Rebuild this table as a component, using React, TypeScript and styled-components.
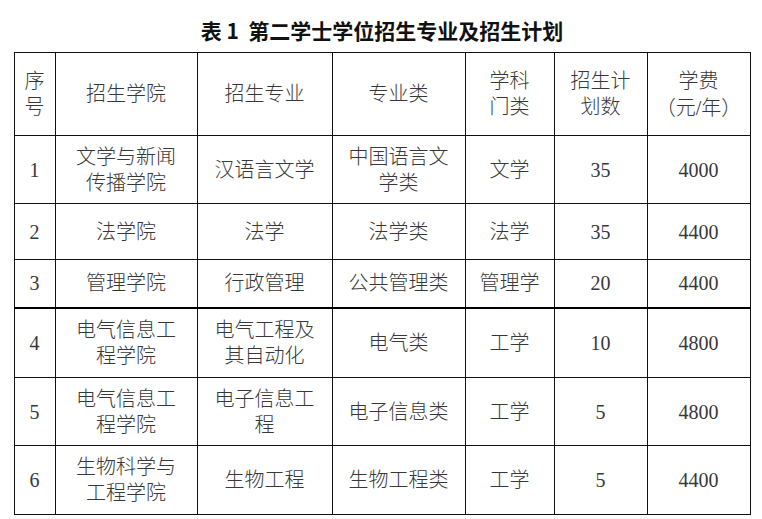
import React from "react";
import styled, { createGlobalStyle } from "styled-components";

const GlobalStyle = createGlobalStyle`
  html, body {
    margin: 0;
    padding: 0;
    background: #ffffff;
  }
`;

const Page = styled.div`
  width: 762px;
  height: 519px;
  padding: 20px 12px 0 14px;
  box-sizing: border-box;
  display: flex;
  flex-direction: column;
  align-items: center;
`;

const Title = styled.h1`
  margin: 0 0 11px 0;
  height: 21px;
  line-height: 21px;
  font-family: "Noto Sans CJK SC", "Noto Sans", sans-serif;
  font-weight: 700;
  font-size: 21px;
  color: #111;
  white-space: pre;
`;

const Table = styled.table`
  width: 736px;
  border-collapse: collapse;
  table-layout: fixed;
  font-family: "Liberation Serif", "Noto Sans CJK SC", serif;
  font-size: 20px;
  font-weight: 300;
  color: #383838;
`;

const Row = styled.tr<{ $h: number; $thick?: boolean }>`
  height: ${(p) => p.$h}px;
  & > td {
    border-bottom: ${(p) => (p.$thick ? "2px solid #000" : "1px solid #111")};
  }
`;

const Cell = styled.td`
  border: 1px solid #111;
  padding: 0;
  text-align: center;
  vertical-align: middle;
  line-height: 26px;
`;

// full-width bracket: glyph sits on the inner side of a 1em box
const Paren = styled.span<{ $side: "open" | "close" }>`
  display: inline-block;
  width: 1em;
  text-align: ${(p) => (p.$side === "open" ? "right" : "left")};
  font-family: "Noto Sans CJK SC", sans-serif;
`;

const widths = [41, 142, 135, 133, 89, 93, 103];

const header: React.ReactNode[] = [
  "序\n号",
  "招生学院",
  "招生专业",
  "专业类",
  "学科\n门类",
  "招生计\n划数",
  <>
    学费
    <br />
    <Paren $side="open">（</Paren>元/年<Paren $side="close">）</Paren>
  </>,
];

const rows: { h: number; thick?: boolean; cells: string[] }[] = [
  { h: 68, cells: ["1", "文学与新闻\n传播学院", "汉语言文学", "中国语言文\n学类", "文学", "35", "4000"] },
  { h: 56, cells: ["2", "法学院", "法学", "法学类", "法学", "35", "4400"] },
  { h: 48, thick: true, cells: ["3", "管理学院", "行政管理", "公共管理类", "管理学", "20", "4400"] },
  { h: 70, cells: ["4", "电气信息工\n程学院", "电气工程及\n其自动化", "电气类", "工学", "10", "4800"] },
  { h: 68, cells: ["5", "电气信息工\n程学院", "电子信息工\n程", "电子信息类", "工学", "5", "4800"] },
  { h: 69, cells: ["6", "生物科学与\n工程学院", "生物工程", "生物工程类", "工学", "5", "4400"] },
];

const Lines = ({ text }: { text: React.ReactNode }) =>
  typeof text !== "string" ? (
    <>{text}</>
  ) : (
    <>
      {text.split("\n").map((line, i) => (
        <React.Fragment key={i}>
          {i > 0 && <br />}
          {line}
        </React.Fragment>
      ))}
    </>
  );

export default function App() {
  return (
    <>
      <GlobalStyle />
      <Page>
        <Title>表 1  第二学士学位招生专业及招生计划</Title>
        <Table>
          <colgroup>
            {widths.map((w, i) => (
              <col key={i} style={{ width: w }} />
            ))}
          </colgroup>
          <tbody>
            <Row $h={83}>
              {header.map((t, i) => (
                <Cell key={i}>
                  <Lines text={t} />
                </Cell>
              ))}
            </Row>
            {rows.map((r, ri) => (
              <Row key={ri} $h={r.h} $thick={r.thick}>
                {r.cells.map((t, i) => (
                  <Cell key={i}>
                    <Lines text={t} />
                  </Cell>
                ))}
              </Row>
            ))}
          </tbody>
        </Table>
      </Page>
    </>
  );
}
